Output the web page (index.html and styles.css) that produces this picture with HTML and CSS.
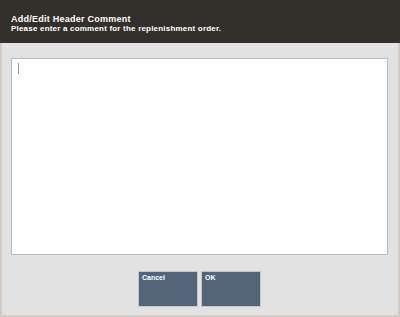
FILE: index.html
```html
<!DOCTYPE html>
<html>
<head>
<meta charset="utf-8">
<link rel="stylesheet" href="styles.css">
</head>
<body>
<div class="screen">
  <header class="header">
    <div class="title">Add/Edit Header Comment</div>
    <div class="subtitle">Please enter a comment for the replenishment order.</div>
  </header>
  <main class="content">
    <div class="textbox"><span class="caret"></span></div>
    <div class="actions">
      <button class="btn">Cancel</button>
      <button class="btn">OK</button>
    </div>
  </main>
</div>
</body>
</html>
```
FILE: styles.css
```css
html, body {
  margin: 0;
  padding: 0;
  width: 400px;
  height: 317px;
  overflow: hidden;
  font-family: "Liberation Sans", Arial, sans-serif;
}
.screen {
  width: 400px;
  height: 317px;
  box-sizing: border-box;
  background: #e2e2e2;
  border-left: 2px solid #d6cbc3;
  border-right: 2px solid #d6cbc3;
  border-bottom: 2px solid #d6cbc3;
  display: flex;
  flex-direction: column;
}
.header {
  background: #33302c;
  color: #ffffff;
  height: 43px;
  box-sizing: border-box;
  padding: 14px 0 0 11px;
  margin: 0 -2px;
}
.title {
  font-weight: bold;
  font-size: 9px;
  line-height: 10px;
  letter-spacing: 0.25px;
}
.subtitle {
  font-weight: bold;
  font-size: 8px;
  line-height: 10px;
  letter-spacing: 0.2px;
}
.content {
  flex: 1;
  display: flex;
  flex-direction: column;
  padding: 15px 10px 0 9px;
}
.textbox {
  height: 197px;
  background: #ffffff;
  border: 1px solid #bdbdbd;
  box-sizing: border-box;
  padding: 4px 0 0 6px;
}
.caret {
  display: block;
  width: 1px;
  height: 11px;
  background: #9a9a9a;
}
.actions {
  display: flex;
  justify-content: center;
  gap: 3px;
  padding-top: 16px;
}
.btn {
  width: 60px;
  height: 36px;
  background: #546579;
  border: 1px solid #c4c8cc;
  color: #ffffff;
  font-family: "Liberation Sans", Arial, sans-serif;
  font-weight: bold;
  font-size: 7px;
  text-align: left;
  padding: 2px 3px;
  display: flex;
  align-items: flex-start;
  margin: 0;
}
```
